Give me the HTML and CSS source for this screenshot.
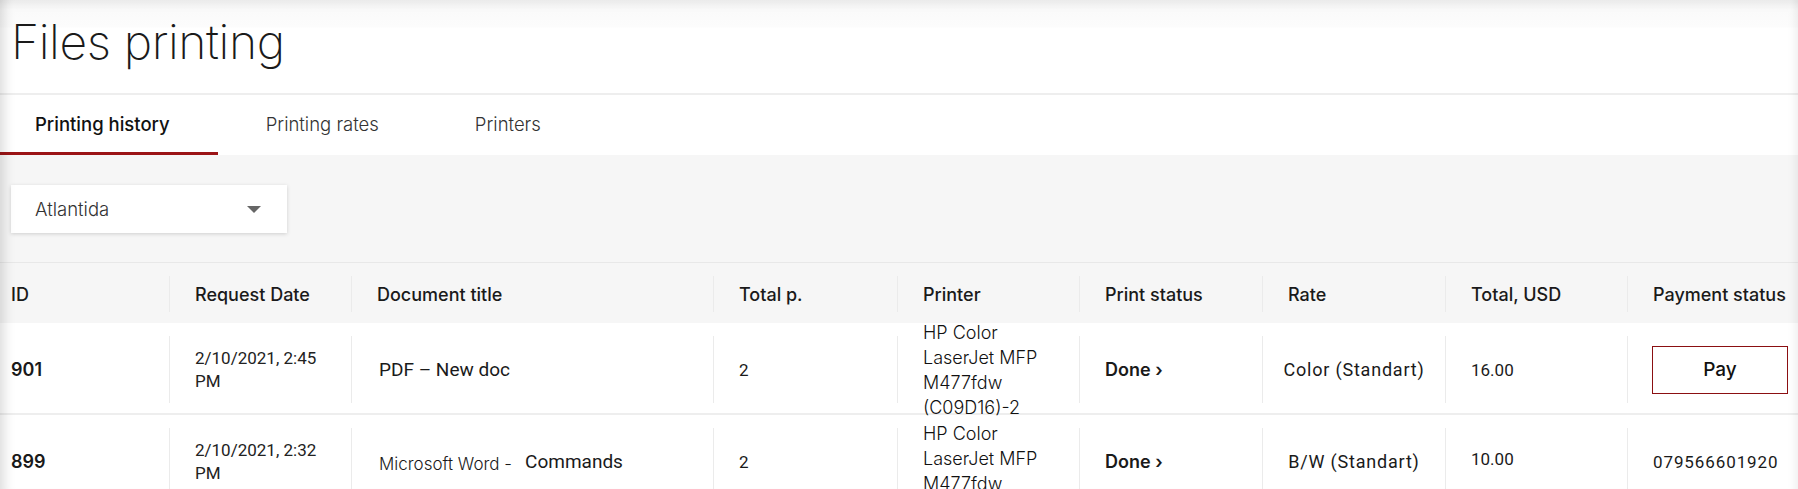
FILE: index.html
```html
<!DOCTYPE html>
<html lang="en">
<head>
    <meta charset="UTF-8">
    <meta name="viewport" content="width=device-width, initial-scale=1.0">
    <title>Files printing</title>
    <link rel="stylesheet" href="styles.css">
</head>
<body>
    <div class="page">
        <header class="page-head">
            <h1>Files printing</h1>
        </header>

        <nav class="tabs">
            <a class="tab active">Printing history</a>
            <a class="tab">Printing rates</a>
            <a class="tab">Printers</a>
        </nav>

        <section class="content">
            <div class="filter">
                <div class="select">
                    <span>Atlantida</span>
                    <span class="caret"></span>
                </div>
            </div>

            <div class="table">
                <div class="row head">
                    <div class="cell">ID</div>
                    <div class="cell">Request Date</div>
                    <div class="cell">Document title</div>
                    <div class="cell">Total p.</div>
                    <div class="cell">Printer</div>
                    <div class="cell">Print status</div>
                    <div class="cell">Rate</div>
                    <div class="cell">Total, USD</div>
                    <div class="cell">Payment status</div>
                </div>

                <div class="row">
                    <div class="cell id">901</div>
                    <div class="cell date">2/10/2021, 2:45 PM</div>
                    <div class="cell doc">PDF – New doc</div>
                    <div class="cell num">2</div>
                    <div class="cell printer">HP Color LaserJet MFP M477fdw (C09D16)-2</div>
                    <div class="cell status">Done ›</div>
                    <div class="cell rate">Color (Standart)</div>
                    <div class="cell num">16.00</div>
                    <div class="cell pay"><button type="button" class="btn-pay">Pay</button></div>
                </div>

                <div class="row">
                    <div class="cell id">899</div>
                    <div class="cell date">2/10/2021, 2:32 PM</div>
                    <div class="cell doc"><span class="doc-type">Microsoft Word -</span><span class="doc-name">Commands</span></div>
                    <div class="cell num">2</div>
                    <div class="cell printer lower">HP Color LaserJet MFP M477fdw (C09D16)-2</div>
                    <div class="cell status">Done ›</div>
                    <div class="cell rate">B/W (Standart)</div>
                    <div class="cell num up">10.00</div>
                    <div class="cell phone">079566601920</div>
                </div>
            </div>
        </section>
    </div>
</body>
</html>
```

FILE: styles.css
```css
body {
    margin: 0;
    font-family: Inter, "Noto Sans", sans-serif;
    color: #1a1a1a;
    background-color: #f6f6f6;
}

.page {
    min-height: 100vh;
    overflow: hidden;
}

/* soft shadow round the page edges */
.page::after {
    content: "";
    position: fixed;
    top: 0;
    left: 0;
    right: 0;
    bottom: 0;
    pointer-events: none;
    box-shadow: inset 14px 0 12px -10px rgba(0, 0, 0, 0.14),
                inset -12px 0 10px -10px rgba(0, 0, 0, 0.08),
                inset 0 14px 14px -12px rgba(0, 0, 0, 0.06);
}

.page-head {
    background: linear-gradient(#f3f3f3, #fafafa 10px, #fcfcfc 27px, #fff 28px);
    border-bottom: 2px solid #eeeeee;
    height: 93px;
    padding-left: 11px;
}

.page-head h1 {
    margin: 0;
    padding-top: 14px;
    font-size: 48px;
    line-height: 56px;
    font-weight: 200;
    letter-spacing: -0.4px;
}

.tabs {
    display: flex;
    height: 60px;
    background-color: #fff;
}

.tab {
    display: flex;
    align-items: center;
    padding: 0 48px;
    font-size: 18.5px;
    font-weight: 300;
    color: #333;
    border-bottom: 3px solid transparent;
    cursor: pointer;
}

.tab:first-child {
    padding-left: 35px;
}

.tab.active {
    font-weight: 500;
    color: #111;
    border-bottom-color: #9b1416;
}

.content {
    padding-top: 30px;
}

.filter {
    padding-left: 11px;
    margin-bottom: 29px;
}

.select {
    display: flex;
    align-items: center;
    justify-content: space-between;
    width: 276px;
    height: 48px;
    box-sizing: border-box;
    padding: 0 26px 0 24px;
    background-color: #fff;
    box-shadow: 0 1px 4px rgba(0, 0, 0, 0.16);
    font-size: 18.5px;
    font-weight: 300;
    color: #333;
}

.caret {
    width: 0;
    height: 0;
    border-left: 7px solid transparent;
    border-right: 7px solid transparent;
    border-top: 7px solid #666;
}

.table {
    border-top: 1px solid #e8e8e8;
}

.row {
    display: grid;
    grid-template-columns: 169px 182px 362px 184px 182px 183px 183px 182px 1fr;
    grid-template-rows: minmax(0, 1fr);
    height: 90px;
    background-color: #fff;
    border-bottom: 2px solid #eeeeee;
}

.row.head {
    height: 60px;
    background-color: #f6f6f6;
    border-bottom: none;
    font-size: 18px;
    font-weight: 500;
    white-space: nowrap;
}

.cell {
    display: flex;
    align-items: center;
    margin: 13px 0 10px;
    padding: 0 24px 0 25px;
    border-left: 1px solid #ebebeb;
    min-width: 0;
    min-height: 0;
}

.head .cell {
    margin: 13px 0 11px;
}

.cell:first-child {
    border-left: none;
    padding-left: 11px;
}

.id {
    font-weight: 600;
    font-size: 18px;
}

.date {
    font-family: Roboto, sans-serif;
    font-size: 17px;
    line-height: 23px;
    color: #222;
}

.doc {
    font-family: Roboto, sans-serif;
    font-size: 19px;
    padding-left: 27px;
}

.doc-type {
    font-family: Inter, sans-serif;
    font-size: 17px;
    font-weight: 300;
    margin-right: 13px;
    margin-top: 4px;
    white-space: nowrap;
}

.doc-name {
    white-space: nowrap;
}

.num {
    font-family: Roboto, sans-serif;
    font-size: 17px;
}

.num.up {
    padding-bottom: 6px;
}

.printer {
    font-size: 18px;
    font-weight: 300;
    line-height: 25px;
    color: #111;
}

.printer.lower {
    padding-top: 18px;
}

.status {
    font-weight: 600;
    font-size: 18px;
}

.rate {
    justify-content: center;
    padding: 0 6px;
    font-family: Roboto, sans-serif;
    font-size: 18px;
    letter-spacing: 0.8px;
}

.phone {
    font-family: Roboto, sans-serif;
    font-size: 17px;
    letter-spacing: 0.9px;
}

.pay {
    padding-left: 24px;
    padding-right: 10px;
}

.btn-pay {
    width: 136px;
    height: 48px;
    background-color: #fff;
    border: 1px solid #8b0f12;
    border-radius: 0;
    font-family: Inter, sans-serif;
    font-size: 19px;
    font-weight: 500;
    color: #111;
    cursor: pointer;
}
```
